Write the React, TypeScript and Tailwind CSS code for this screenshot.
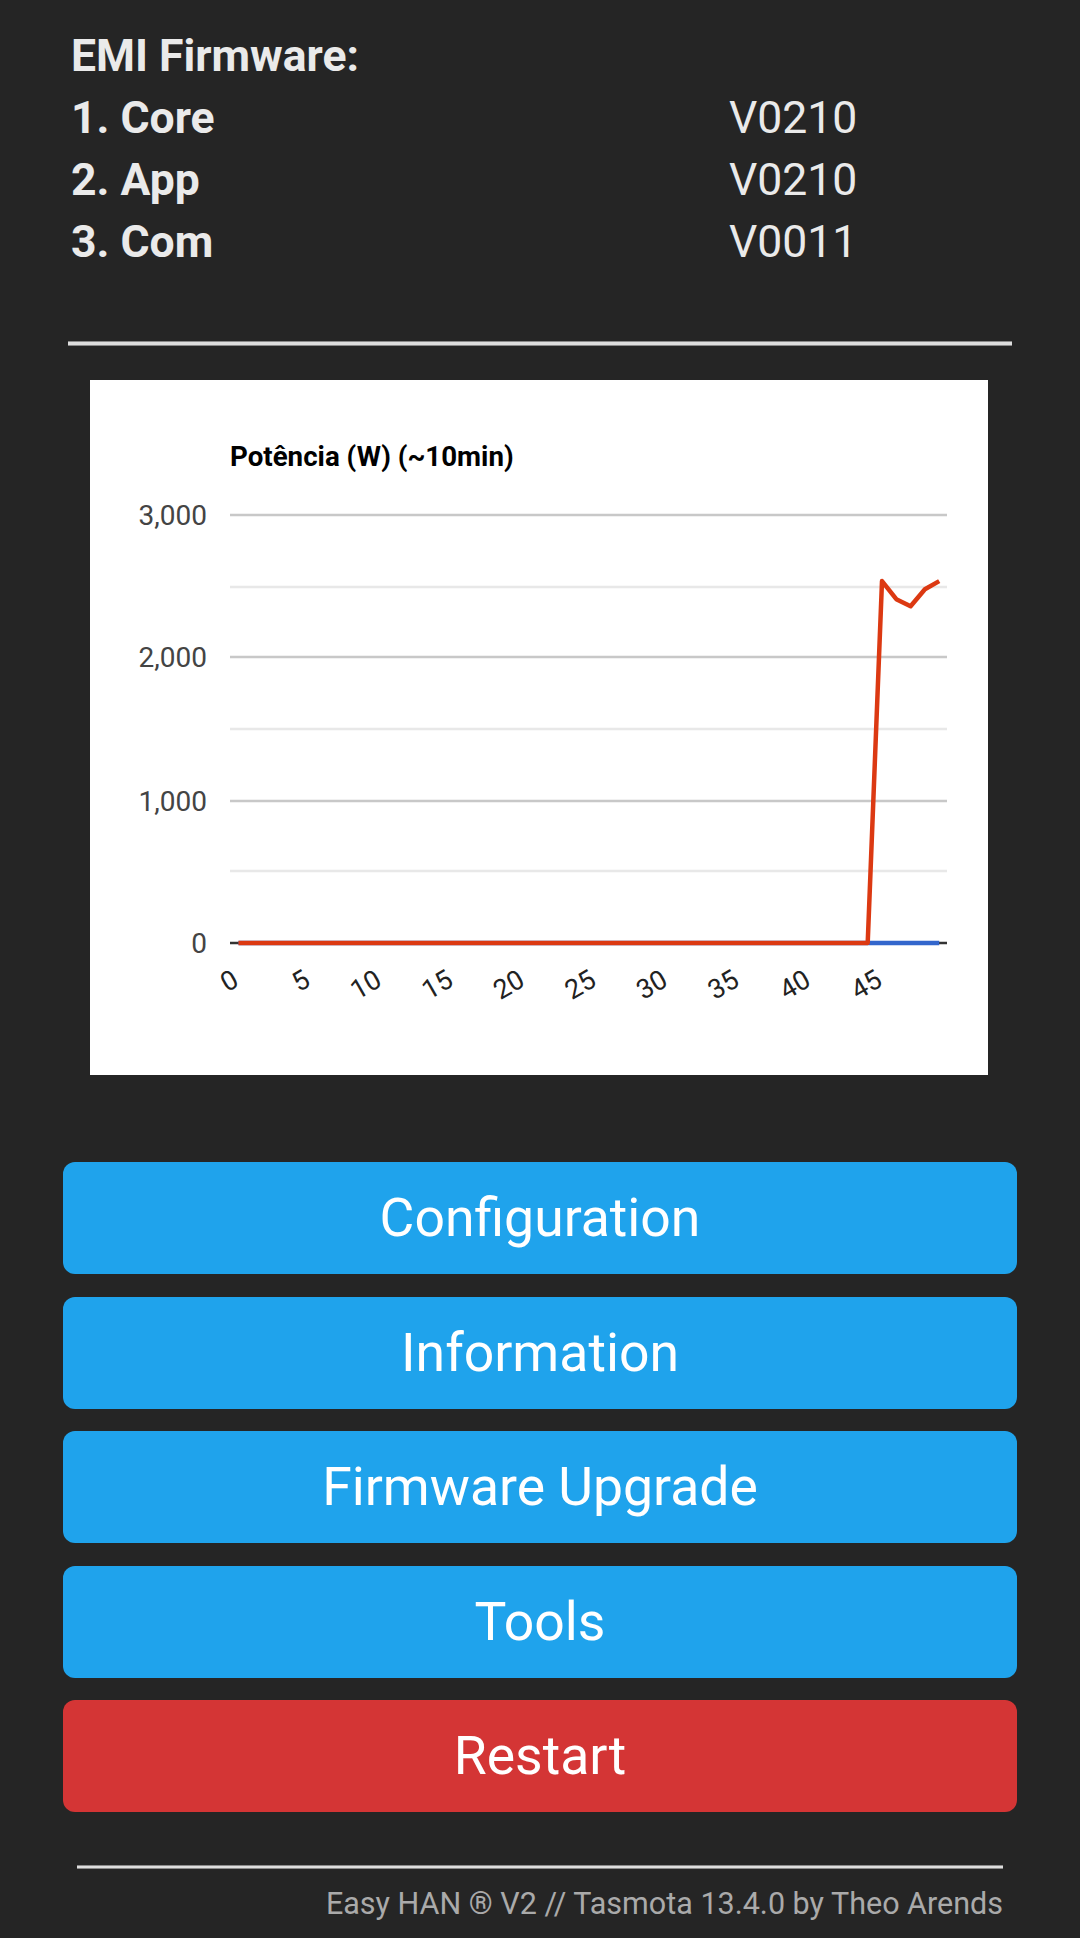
import React from "react";

const red: number[] = [];
for (let i = 0; i < 45; i++) red.push(0);
red.push(2537, 2410, 2361, 2480, 2537);
const blue: number[] = Array.from({ length: 50 }, () => 0);

const X0 = 148.5;
const DX = 14.3;
const Y0 = 563;
const K = 428 / 3000;

const px = (i: number) => X0 + DX * i;
const py = (v: number) => Y0 - v * K;

function Chart() {
  const redPts = red.map((v, i) => `${px(i).toFixed(1)},${py(v).toFixed(1)}`).join(" ");
  const bluePts = blue.map((v, i) => `${px(i).toFixed(1)},${py(v).toFixed(1)}`).join(" ");
  const minor = [207, 349, 491];
  const major = [
    { y: 135, l: "3,000" },
    { y: 277, l: "2,000" },
    { y: 421, l: "1,000" },
  ];
  const ticks = [0, 5, 10, 15, 20, 25, 30, 35, 40, 45];
  return (
    <svg width={898} height={695} viewBox="0 0 898 695" className="block">
      <rect x={0} y={0} width={898} height={695} fill="#ffffff" />
      <text x={140} y={86} fontSize={27.7} fontWeight={700} fill="#000" fontFamily="Roboto, 'Noto Sans', sans-serif">
        Potência (W) (~10min)
      </text>
      {minor.map((y) => (
        <line key={y} x1={140} x2={857} y1={y} y2={y} stroke="#e8e8e8" strokeWidth={2.5} />
      ))}
      {major.map((m) => (
        <g key={m.y}>
          <line x1={140} x2={857} y1={m.y} y2={m.y} stroke="#c8c8c8" strokeWidth={2.5} />
          <text x={117} y={m.y + 10} textAnchor="end" fontSize={28} fill="#444" fontFamily="Roboto, 'Noto Sans', sans-serif">
            {m.l}
          </text>
        </g>
      ))}
      <text x={117} y={Y0 + 10} textAnchor="end" fontSize={28} fill="#444" fontFamily="Roboto, 'Noto Sans', sans-serif">
        0
      </text>
      <line x1={140} x2={857} y1={Y0} y2={Y0} stroke="#333333" strokeWidth={2.5} />
      <polyline points={bluePts} fill="none" stroke="#3366cc" strokeWidth={4.5} strokeLinejoin="round" />
      <polyline points={redPts} fill="none" stroke="#dc3912" strokeWidth={4.5} strokeLinejoin="round" />
      {ticks.map((t) => {
        const ax = px(t) + 2;
        const ay = 605;
        return (
          <text
            key={t}
            x={ax}
            y={ay}
            textAnchor="end"
            fontSize={27}
            fill="#222"
            fontFamily="Roboto, 'Noto Sans', sans-serif"
            transform={`rotate(-30 ${ax} ${ay})`}
          >
            {t}
          </text>
        );
      })}
    </svg>
  );
}

function Btn({ label, red: isRed }: { label: string; red?: boolean }) {
  return (
    <div
      className={`flex h-[112px] w-full items-center justify-center rounded-[12px] text-[53.5px] leading-none text-white ${
        isRed ? "bg-[#d43535]" : "bg-[#1fa3ec]"
      }`}
    >
      {label}
    </div>
  );
}

export default function App() {
  const rows = [
    { l: "1. Core", v: "V0210" },
    { l: "2. App", v: "V0210" },
    { l: "3. Com", v: "V0011" },
  ];
  return (
    <div
      className="min-h-[1938px] w-full bg-[#252525] text-[#eaeaea]"
      style={{ fontFamily: "Roboto, 'Noto Sans', sans-serif" }}
    >
      <div className="pl-[71px] pt-[25px] text-[44.5px] leading-[62px]">
        <div className="font-bold">EMI Firmware:</div>
        {rows.map((r) => (
          <div key={r.l} className="flex">
            <div className="w-[658px] font-bold">{r.l}</div>
            <div>{r.v}</div>
          </div>
        ))}
      </div>
      <div className="ml-[68px] mt-[68px] h-[5px] w-[944px] border-y border-[#8a8a8a] bg-[#dedede]" />
      <div className="ml-[90px] mt-[34px] w-[898px]">
        <Chart />
      </div>
      <div className="mx-[63px] mt-[87px] flex flex-col gap-[22.5px]">
        <Btn label="Configuration" />
        <Btn label="Information" />
        <Btn label="Firmware Upgrade" />
        <Btn label="Tools" />
        <Btn label="Restart" red />
      </div>
      <div className="ml-[77px] mt-[53px] h-[4px] w-[926px] border-y border-[#8a8a8a] bg-[#dedede]" />
      <div className="mr-[77px] mt-[17px] text-right text-[30.5px] leading-[36px] text-[#aaaaaa]">
        Easy HAN ® V2 // Tasmota 13.4.0 by Theo Arends
      </div>
    </div>
  );
}
